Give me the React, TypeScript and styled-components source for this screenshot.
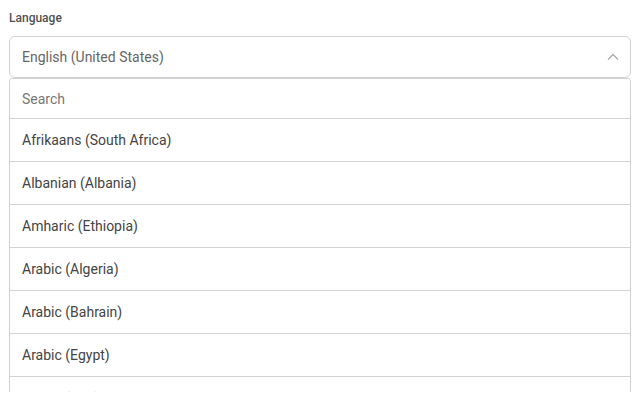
import React from "react";
import styled, { createGlobalStyle } from "styled-components";

const GlobalStyle = createGlobalStyle`
  html, body {
    margin: 0;
    padding: 0;
    background: #fff;
    font-family: Roboto, "Liberation Sans", Arial, sans-serif;
  }
`;

const Page = styled.div`
  padding: 10px 13px 0 9px;
  display: flex;
  flex-direction: column;
`;

const Label = styled.label`
  font-size: 12px;
  font-weight: 500;
  color: #505050;
  line-height: 16px;
  margin-bottom: 10px;
`;

const SelectBox = styled.div`
  height: 40px;
  border: 1px solid #d2d2d2;
  border-radius: 6px;
  display: flex;
  align-items: center;
  justify-content: space-between;
  padding: 0 11px 0 12px;
  font-size: 14px;
  color: #666;
`;

const Menu = styled.div`
  border: 1px solid #d2d2d2;
  border-bottom: none;
  border-radius: 4px 4px 0 0;
  height: 313px;
  overflow: hidden;
  position: relative;
  &::after {
    content: "";
    position: absolute;
    left: 0;
    right: 0;
    bottom: 0;
    height: 6px;
    background: linear-gradient(rgba(255, 255, 255, 0), rgba(255, 255, 255, 0.85));
  }
`;

const SearchInput = styled.input`
  display: block;
  width: 100%;
  box-sizing: border-box;
  height: 40px;
  border: none;
  border-bottom: 1px solid #d2d2d2;
  padding: 0 12px;
  font-family: inherit;
  font-size: 14px;
  color: #444;
  outline: none;
  &::placeholder {
    color: #777;
  }
`;

const Option = styled.div`
  height: 42px;
  border-bottom: 1px solid #d2d2d2;
  display: flex;
  align-items: center;
  padding: 0 12px;
  font-size: 14px;
  color: #444;
`;

const options = [
  "Afrikaans (South Africa)",
  "Albanian (Albania)",
  "Amharic (Ethiopia)",
  "Arabic (Algeria)",
  "Arabic (Bahrain)",
  "Arabic (Egypt)",
  "Arabic (Iraq)",
  "Arabic (Jordan)",
];

const Chevron = () => (
  <svg width="12" height="8" viewBox="0 0 12 8" fill="none">
    <path d="M1 6.5L6 1.5L11 6.5" stroke="#aaa" strokeWidth="1.3" />
  </svg>
);

export default function App() {
  return (
    <>
      <GlobalStyle />
      <Page>
        <Label>Language</Label>
        <SelectBox>
          <span>English (United States)</span>
          <Chevron />
        </SelectBox>
        <Menu>
          <SearchInput placeholder="Search" />
          {options.map((o) => (
            <Option key={o}>{o}</Option>
          ))}
        </Menu>
      </Page>
    </>
  );
}
